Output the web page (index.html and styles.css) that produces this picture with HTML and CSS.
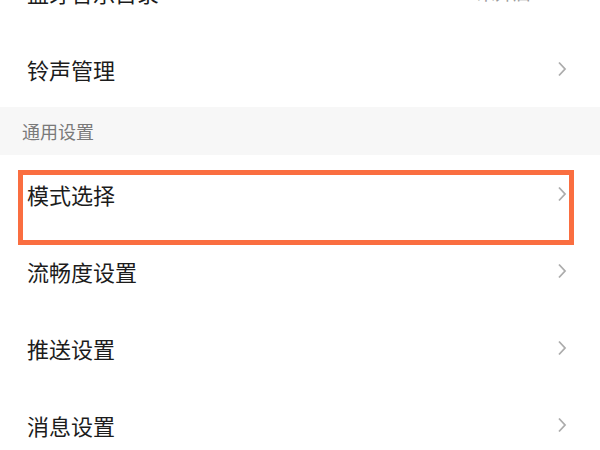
FILE: index.html
```html
<!DOCTYPE html>
<html lang="zh-CN">
<head>
<meta charset="utf-8">
<link rel="stylesheet" href="styles.css">
</head>
<body>
<div class="page">
  <div class="list">
    <div class="row"><span class="label">蓝牙音乐目录</span><span class="value">未开启</span></div>
    <div class="row"><span class="label">铃声管理</span><svg class="chev" viewBox="0 0 10 16"><path d="M2 1.5 L8 8 L2 14.5"/></svg></div>
  </div>
  <div class="section">通用设置</div>
  <div class="list">
    <div class="row highlighted"><span class="label">模式选择</span><svg class="chev" viewBox="0 0 10 16"><path d="M2 1.5 L8 8 L2 14.5"/></svg><div class="mark"></div></div>
    <div class="row"><span class="label">流畅度设置</span><svg class="chev" viewBox="0 0 10 16"><path d="M2 1.5 L8 8 L2 14.5"/></svg></div>
    <div class="row"><span class="label">推送设置</span><svg class="chev" viewBox="0 0 10 16"><path d="M2 1.5 L8 8 L2 14.5"/></svg></div>
    <div class="row"><span class="label">消息设置</span><svg class="chev" viewBox="0 0 10 16"><path d="M2 1.5 L8 8 L2 14.5"/></svg></div>
  </div>
</div>
</body>
</html>
```

FILE: styles.css
```css
html, body {
  margin: 0;
  padding: 0;
  background: #ffffff;
  overflow: hidden;
}
* {
  box-sizing: border-box;
}
.page {
  width: 600px;
  height: 450px;
  overflow: hidden;
  font-family: "Noto Sans CJK SC", "Noto Sans", sans-serif;
}
.list {
  display: flex;
  flex-direction: column;
}
.list:first-child {
  margin-top: -47px;
}
.row {
  height: 77px;
  flex: none;
  display: flex;
  align-items: center;
  justify-content: space-between;
  padding: 0 33px 0 27px;
  position: relative;
}
.label {
  font-size: 22px;
  color: #1c1c1c;
  line-height: 1;
}
.value {
  font-size: 18px;
  color: #9a9a9a;
  margin-right: 36px;
}
.chev {
  width: 10px;
  height: 16px;
  fill: none;
  stroke: #acacac;
  stroke-width: 1.8;
}
.section {
  height: 48px;
  background: #f7f7f7;
  padding-left: 22px;
  font-size: 18px;
  color: #7a7a7a;
  display: flex;
  align-items: center;
  line-height: 1;
}
.mark {
  position: absolute;
  left: 18px;
  top: 15px;
  width: 556px;
  height: 75px;
  border: 5px solid #fa6e40;
}
```
